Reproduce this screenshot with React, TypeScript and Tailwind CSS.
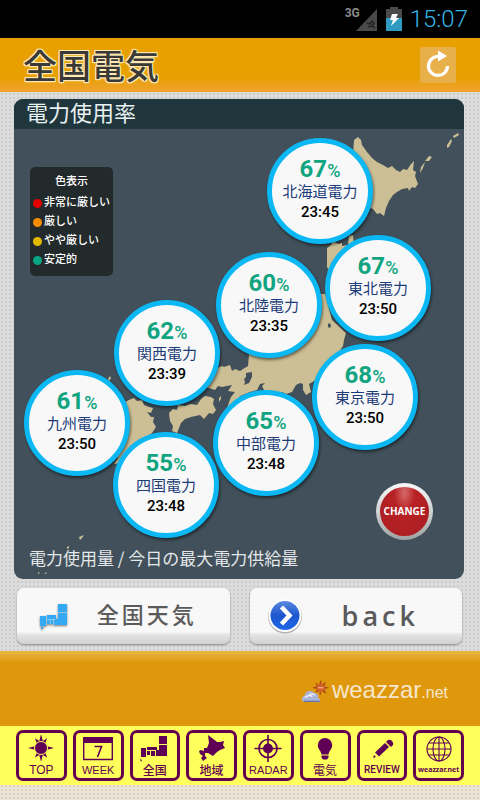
import React from 'react';

const JP = "font-['Roboto','Noto_Sans_CJK_JP',sans-serif]";

const pins = [
  { name: '北海道電力', pct: 67, time: '23:45', x: 253, y: 9 },
  { name: '東北電力', pct: 67, time: '23:50', x: 311, y: 106 },
  { name: '北陸電力', pct: 60, time: '23:35', x: 202, y: 123 },
  { name: '関西電力', pct: 62, time: '23:39', x: 100, y: 171 },
  { name: '九州電力', pct: 61, time: '23:50', x: 10, y: 241 },
  { name: '東京電力', pct: 68, time: '23:50', x: 298, y: 215 },
  { name: '中部電力', pct: 65, time: '23:48', x: 199, y: 261 },
  { name: '四国電力', pct: 55, time: '23:48', x: 99, y: 303 },
];

const legend = [
  { color: 'bg-[#e60000]', text: '非常に厳しい' },
  { color: 'bg-[#f78b00]', text: '厳しい' },
  { color: 'bg-[#e5b800]', text: 'やや厳しい' },
  { color: 'bg-[#08a583]', text: '安定的' },
];

function StatusBar() {
  return (
    <div className="flex h-[38px] items-center justify-end bg-black pr-3">
      <span className="mb-3 font-['Roboto',sans-serif] text-[12px] leading-4 font-bold text-[#8a8a8a]">3G</span>
      <svg className="-ml-1 h-[24px] w-[21px]" viewBox="0 0 21 24">
        <path d="M21 2V24H0Z" fill="#4a4a4a" />
        <path d="M11 16l3 1 2-3 2 2-2 3 3 2M12 20l4-1" stroke="#222" strokeWidth="1.5" fill="none" />
      </svg>
      <svg className="ml-[9px] h-[24px] w-[16px]" viewBox="0 0 16 24">
        <path d="M4 0h8v2h4v9H0V2h4z" fill="#4a4a4a" />
        <path d="M0 11h16v13H0z" fill="#2f9bc1" />
        <path d="M6 7h6l-2 4h3L5 19l2-6H4z" fill="#fff" />
      </svg>
      <time className="ml-2 font-['Roboto',sans-serif] text-[24px] leading-[38px] font-light text-[#33b5e5]">15:07</time>
    </div>
  );
}

function Header() {
  return (
    <header className="flex h-[54px] items-center justify-between bg-linear-to-b from-[#e8a000] from-75% to-[#f0a22c] pr-6 pl-[23px]">
      <h1 className="font-['Noto_Sans_CJK_JP',sans-serif] text-[34px] leading-[54px] font-medium text-[#3a3935] [text-shadow:1px_1px_0_#ffe9b8,-1px_-1px_0_#ffe9b8,1px_-1px_0_#ffe9b8,-1px_1px_0_#ffe9b8,0_1px_2px_#ffe9b8]">
        全国電気
      </h1>
      <button type="button" aria-label="更新" className="flex size-9 items-center justify-center rounded-[3px] bg-[#e8b04a]">
        <svg viewBox="0 0 36 36" className="size-9">
          <path d="M19 9.500A9.500 9.500 0 1 0 27.500 19" fill="none" stroke="#fff" strokeWidth="3.200" />
          <path d="M18 3.500L27 9 18 14.500Z" fill="#fff" />
        </svg>
      </button>
    </header>
  );
}

function JapanMap() {
  return (
    <svg viewBox="14 129 450 450" className="block h-[450px] w-[450px]" aria-hidden="true">
      <g fill="#cdbf95">
        <path d="M354 140L358 137 361 140 362 145 367 152 372 158 377 162 383 165 388 168 392 166 396 170 400 172 403 169 407 170 411 164 414 161 413 170 416 172 415 176 418 184 415 188 412 187 409 191 408 188 402 189 397 192 393 195 389 201 386 208 384 216 380 213 377 214 373 209 350 200z" />
        <path d="M453 136l5-3 1 2-5 3zM447 145l4-6 1 2-3 6-2 1zM425 161l4-5 3 1-3 4zM420 172l1-5 4-5-2 6-3 5z" />
        <path d="M327 248l4-3 2-4 5 3 4-1 0 3 6-1 1-9 4-1 1 12 3 14-24 12-3-1-3-5z" />
        <path d="M322 294L325 294 332 320 346 333 344 340 343 346 339 352 338 362 335 368 318 376 314 381 309 384 311 392 306 395 303 390 303 384 300 383 296 385 292 392 286 394 282 392 276 396 265 392 262 386 265 383 260 384 257 390 250 392 240 396 232 410 226 412 229 402 231 397 235 392 228 391 232 385 222 387 218 386 215 390 206 387 200 380 210 372 217 368 222 366 224 367 230 365 232 371 235 369 240 371 243 369 248 366 249 355 255 345 300 300z" />
        <path d="M169 413L173 409 177 410 178 405 185 406 191 404 197 405 201 399 205 396 211 397 214 399 213 404 216 410 213 414 209 413 204 419 200 415 191 417 185 419 181 423 177 433 172 431 173 426 170 421z" />
        <path d="M125 402L129 400 134 398 137 401 142 400 144 405 149 407 153 408 151 413 147 412 151 417 154 417 153 422 156 427 152 433 148 436 136 445 128 452 121 463 114 464 118 458 110 440z" />
        <path d="M108 379l2-3 1 2-2 3zM79 537l5-2-2 3-2 2zM67 547l2-1 0 2-2 1zM38 572l2 1-2 1zM44 574l3-2-1 2zM219 398l2-2 0 3-2 3z" />
      </g>
      <g fill="#41505a">
        <path d="M246 373l6-1 0 5-3 6-5 2 1-3-1-3 2-2zM328 324l2-1 1 3-1 2-2-1z" />
      </g>
    </svg>
  );
}

function Pin({ name, pct, time, x, y }: (typeof pins)[number]) {
  return (
    <button
      type="button"
      className="absolute flex size-[106px] flex-col items-center rounded-full border-[5px] border-[#0cb8f4] bg-[#f8f8f8] pt-[14px] shadow-[1px_2px_3px_rgba(0,0,0,0.5)]"
      style={{ left: x, top: y }}
    >
      <span className="font-['Roboto',sans-serif] text-[24px] leading-6 font-bold text-[#10a580]">
        {pct}
        <span className="text-[18px] font-medium">%</span>
      </span>
      <span className={`${JP} text-[15px] leading-[18px] whitespace-nowrap text-[#1c3c78]`}>{name}</span>
      <time className="mt-px font-['Roboto',sans-serif] text-[15px] leading-5 font-medium text-black">{time}</time>
    </button>
  );
}

function PowerPanel() {
  return (
    <section className="overflow-hidden rounded-[9px] bg-[#41505a]">
      <h2 className={`${JP} h-[30px] bg-[#20363d] pl-3 text-[22px] leading-[30px] text-[#e9f1f2]`}>電力使用率</h2>
      <div className="relative mx-auto h-[450px] w-[450px]">
        <JapanMap />
        <div className="absolute top-[38px] left-4 h-[109px] w-[83px] rounded-[5px] bg-[#222a2b] pt-[5px]">
          <h3 className={`${JP} text-center text-[11px] leading-[20px] font-medium text-white`}>色表示</h3>
          <ul className="mt-[2px] pl-[3px]">
            {legend.map((item) => (
              <li key={item.text} className={`${JP} flex h-[19px] items-center gap-[2px] text-[11px] font-medium whitespace-nowrap text-white`}>
                <span className={`size-[9px] shrink-0 rounded-full ${item.color}`} />
                {item.text}
              </li>
            ))}
          </ul>
        </div>
        {pins.map((pin) => (
          <Pin key={pin.name} {...pin} />
        ))}
        <button
          type="button"
          className="absolute top-[354px] left-[362px] flex size-[57px] items-center justify-center rounded-full bg-linear-to-b from-[#f8f8f8] via-[#d0d2d2] to-[#9ea2a3]"
        >
          <span className="flex size-[49px] items-center justify-center rounded-full bg-radial-[at_50%_12%] from-[#d66a68] via-[#b82226] via-30% to-[#a81c20] font-['Open_Sans',sans-serif] text-[10px] font-bold text-white">
            CHANGE
          </span>
        </button>
        <p className="absolute top-[416px] left-[15px] font-['Noto_Sans_CJK_JP',sans-serif] text-[17px] leading-[26px] whitespace-nowrap text-[#e4e8ea]">
          電力使用量 / 今日の最大電力供給量
        </p>
      </div>
    </section>
  );
}

const bigButton =
  'flex h-[56px] items-center rounded-[7px] bg-linear-to-b from-[#f8f8f8] from-78% via-[#e2e2e2] via-84% to-[#d2d2d2] shadow-[0_1px_2px_rgba(0,0,0,0.4)]';

function ActionButtons() {
  return (
    <div className="mt-[9px] grid grid-cols-2 gap-5 pr-[2px] pl-[3px]">
      <button type="button" className={bigButton}>
        <svg viewBox="0 0 28 27" className="ml-[23px] h-[27px] w-[28px] shrink-0 drop-shadow-[0_1px_1px_#777]">
          <path fill="#35aaf4" d="M18 1h9v8h-9zM18 10h9v12H14v-6h4zM7 12h9v4H7zM7 16h6v5H7zM0 13h6v10H0zM1 24h2v2H1z" />
          <path d="M6.500 12v10M7 16.500h8M18 9.500h9M10 17v5M13.500 16v6" stroke="#a8d8f4" strokeWidth="0.700" />
        </svg>
        <span className={`${JP} flex-1 pr-1 text-center text-[22px] leading-[44px] font-medium tracking-[3px] text-[#5a5a5a]`}>全国天気</span>
      </button>
      <button type="button" className={bigButton}>
        <svg viewBox="0 0 36 36" className="ml-[17px] size-9 shrink-0">
          <defs>
            <linearGradient id="blue" x1="0" y1="0" x2="0" y2="1">
              <stop offset="0" stopColor="#5b8be0" />
              <stop offset="0.5" stopColor="#1d56cf" />
              <stop offset="1" stopColor="#1f68e8" />
            </linearGradient>
          </defs>
          <circle cx="18" cy="18.500" r="17" fill="#b4b4b4" />
          <circle cx="18" cy="17.500" r="16.500" fill="#fff" />
          <circle cx="18" cy="17.500" r="14.500" fill="url(#blue)" />
          <path d="M14.500 9l8 8.500-8 8.500" fill="none" stroke="#fff" strokeWidth="4.500" />
        </svg>
        <span className="flex-1 pr-1 text-center font-['Open_Sans',sans-serif] text-[27px] leading-[44px] font-semibold tracking-[4px] text-[#5a5a5a]">back</span>
      </button>
    </div>
  );
}

function Brand() {
  return (
    <div className="flex h-[75px] items-center justify-end bg-linear-to-b from-[#e8b83c] via-[#df980c] via-15% to-[#df980c] pt-[6px] pr-8">
      <svg viewBox="0 0 32 28" className="mr-px h-[28px] w-[30px]">
        <path d="M21 1l1.500 5 4-3-1.500 5 5 1.500-5 1.500 2 5-5-3-1.500 5-1.500-5-4 2 2-4-5-1.500 5-2-2-4 4 3z" fill="#a84a14" />
        <circle cx="21" cy="9.500" r="4.500" fill="#d4602a" />
        <path d="M18 9.500h6" stroke="#f4d0a0" />
        <path d="M2 24c-3-3 0-6 2-6 0-5 7-7 10-3 4 0 5 3 4 5 3 1 3 4 1 5z" fill="#aab4d8" />
        <path d="M4 20c4-3 6-3 8-1M9 17c2-2 4-1 6 0" stroke="#eef" strokeWidth="1.500" fill="none" />
        <path d="M3 24h17" stroke="#6878a8" strokeWidth="1.500" />
      </svg>
      <p className="font-['Liberation_Sans',sans-serif] text-[24px] leading-8 text-[#f6e6cc]">
        weazzar<span className="text-[16px]">.net</span>
      </p>
    </div>
  );
}

const P = '#5f0056';

const tabs = [
  {
    label: 'TOP',
    text: "font-['Liberation_Sans',sans-serif] text-[12px]",
    icon: (
      <>
        <path d="M15 0l2 8 5-3-2 5 2 4 8 2-8 2-2 4 2 5-5-3-2 8-2-8-5 3 2-5-2-4-8-2 8-2 2-4-2-5 5 3z" transform="translate(2 -1) scale(0.870)" fill={P} />
        <circle cx="15" cy="13" r="6.500" fill={P} stroke="#ffff5c" />
      </>
    ),
  },
  {
    label: 'WEEK',
    text: "font-['Liberation_Sans',sans-serif] text-[11px]",
    icon: (
      <>
        <path d="M0.700 3h28.600v21.500H0.700z" fill="none" stroke={P} strokeWidth="1.400" />
        <path d="M0 2h30v6H0z" fill={P} />
        <path d="M11.500 11.500h7l-4 10.500" fill="none" stroke={P} strokeWidth="1.600" />
      </>
    ),
  },
  {
    label: '全国',
    text: "font-['Noto_Sans_CJK_JP',sans-serif] text-[12px] font-medium",
    icon: (
      <path fill={P} d="M19 1h8v8h-8zM19 10h8v11H16v-6h3zM7 12h10v3H7zM7 16h3v4H7zM11 16h4v5h-4zM1 13h5v9H1zM0 24l2 1-1 2z" />
    ),
  },
  {
    label: '地域',
    text: "font-['Noto_Sans_CJK_JP',sans-serif] text-[12px] font-medium",
    icon: (
      <path fill={P} d="M11 0l4 3 5 4 3 0 4-1-1 4 2 3-5 2-3 2-4 4-5-3-3 0 0 3 2 2-4 3-2-3 2-2-3-2-1-3 2-1 3 1 0-3 3 0 2-5z" />
    ),
  },
  {
    label: 'RADAR',
    text: "font-['Liberation_Sans',sans-serif] text-[11px]",
    icon: (
      <>
        <circle cx="15" cy="13.500" r="9" fill="none" stroke={P} strokeWidth="1.700" />
        <circle cx="15" cy="13.500" r="5" fill={P} />
        <path d="M15 0v9M15 18v9M1.500 13.500h9M19.500 13.500h9" stroke={P} strokeWidth="1.600" />
      </>
    ),
  },
  {
    label: '電気',
    text: "font-['Noto_Sans_CJK_JP',sans-serif] text-[12px]",
    icon: (
      <path fill={P} d="M15 3a7.200 7.200 0 0 1 7.200 7.200c0 4-3 5-3.700 9.300h-7C10.800 15 7.800 14 7.800 10.200A7.200 7.200 0 0 1 15 3zM11.500 20.500h7v2l-1.500 2h-4l-1.500-2z" />
    ),
  },
  {
    label: 'REVIEW',
    text: "font-['Roboto',sans-serif] text-[10px] font-medium",
    icon: (
      <path fill={P} d="M6 23l1-3 2 2zM8 17.500L18 8l4 4-10 9.500zM19 7l2-2q2-1 4 1t1 4l-2 2z" />
    ),
  },
  {
    label: 'weazzar.net',
    text: "font-['Noto_Sans',sans-serif] text-[7px] font-bold",
    icon: (
      <g fill="none" stroke={P} strokeWidth="1.100">
        <circle cx="15" cy="14" r="12" />
        <ellipse cx="15" cy="14" rx="6" ry="12" />
        <path d="M15 2v24M3 14h24M5 8h20M5 20h20" />
      </g>
    ),
  },
];

function TabBar() {
  return (
    <nav className="grid h-[59px] grid-cols-8 gap-1.5 bg-[#ffff5c] px-4 py-1">
      {tabs.map((tab) => (
        <a key={tab.label} href="#" className="flex h-[51px] flex-col items-center rounded-[7px] border-3 border-[#650050] text-[#650050]">
          <svg viewBox="0 0 30 28" className="mt-[2px] h-[28px] w-[30px] shrink-0">
            {tab.icon}
          </svg>
          <span className={`${tab.text} leading-[14px] whitespace-nowrap`}>{tab.label}</span>
        </a>
      ))}
    </nav>
  );
}

export default function App() {
  return (
    <div className="min-h-screen bg-[#ece4d6] bg-[radial-gradient(#ddd2c0_1px,transparent_1px)] bg-size-[4px_4px]">
      <StatusBar />
      <Header />
      <main className="bg-[#dcdcdc] bg-[radial-gradient(#cccccc_1px,transparent_1px)] bg-size-[4px_4px] pt-[7px] pr-4 pb-[7px] pl-[14px]">
        <PowerPanel />
        <ActionButtons />
      </main>
      <Brand />
      <TabBar />
    </div>
  );
}
